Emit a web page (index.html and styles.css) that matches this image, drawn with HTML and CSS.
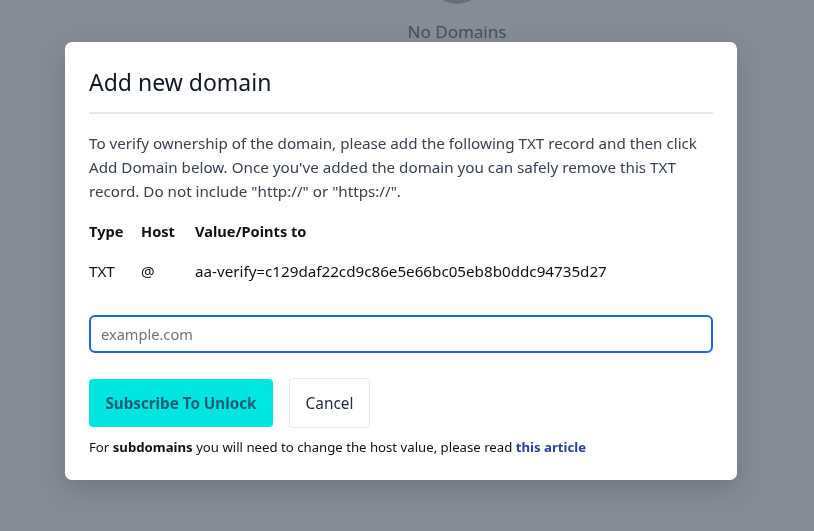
FILE: index.html
```html
<!DOCTYPE html>
<html lang="en">
  <head>
    <meta charset="utf-8">
    <title>Add new domain</title>
    <meta name="viewport" content="width=device-width, initial-scale=1">
    <link rel="stylesheet" href="styles.css">
  </head>
<body>

	<div class="empty">
		<div class="empty-icon"></div>
		<p>No Domains</p>
	</div>

	<div class="overlay"></div>

	<div class="modal">
		<h2 class="modal-title">Add new domain</h2>
		<p class="modal-text">
			To verify ownership of the domain, please add the following TXT record and then click
			Add Domain below. Once you've added the domain you can safely remove this TXT
			record. Do not include "http://" or "https://".
		</p>

		<div class="records">
			<span class="head">Type</span>
			<span class="head">Host</span>
			<span class="head">Value/Points to</span>
			<span>TXT</span>
			<span>@</span>
			<span>aa-verify=c129daf22cd9c86e5e66bc05eb8b0ddc94735d27</span>
		</div>

		<input class="domain-input" type="text" placeholder="example.com">

		<div class="actions">
			<button class="btn btn-primary">Subscribe To Unlock</button>
			<button class="btn btn-cancel">Cancel</button>
		</div>

		<p class="note">For <b>subdomains</b> you will need to change the host value, please read <a href="#">this article</a></p>
	</div>

</body>
</html>
```

FILE: styles.css
```css
* {
    padding: 0;
    margin: 0;
    box-sizing: border-box;
}
body {
    font-family: "Noto Sans", "Open Sans", sans-serif;
    background: #ffffff;
    height: 531px;
    overflow: hidden;
}

/* page behind the dialog */
.empty {
    display: flex;
    flex-direction: column;
    align-items: center;
    padding-left: 100px;
}
.empty-icon {
    width: 56px;
    height: 56px;
    margin-top: -52px;
    border-radius: 50%;
    background: #9ca3af;
}
.empty p {
    margin-top: 16px;
    font-size: 17px;
    color: #374151;
}
.overlay {
    position: fixed;
    inset: 0;
    background: rgba(75, 85, 99, .68);
}

/* dialog */
.modal {
    position: absolute;
    top: 42px;
    left: 65px;
    width: 672px;
    padding: 24px;
    background: #fff;
    border-radius: 7px;
    box-shadow: 0 10px 25px rgba(0, 0, 0, .15);
}
.modal-title {
    font-size: 23px;
    font-weight: 400;
    line-height: 32px;
    color: #111827;
    padding-bottom: 14px;
    border-bottom: 2px solid #e5e7eb;
}
.modal-text {
    margin-top: 17px;
    font-size: 15.2px;
    line-height: 24px;
    color: #374151;
}
.records {
    display: grid;
    grid-template-columns: 52px 54px auto;
    margin-top: 8px;
    font-size: 15.2px;
    line-height: 24px;
    color: #111;
}
.records span {
    padding: 8px 0;
}
.records .head {
    font-size: 14.6px;
    font-weight: 700;
}
.domain-input {
    display: block;
    width: 100%;
    height: 38px;
    margin-top: 24px;
    padding: 0 10px;
    font-family: inherit;
    font-size: 14.6px;
    color: #111;
    border: 2px solid #1d64e0;
    border-radius: 6px;
    outline: none;
}
.domain-input::placeholder {
    color: #6b7280;
}
.actions {
    display: flex;
    align-items: center;
    gap: 16px;
    margin-top: 25px;
}
.btn {
    font-family: inherit;
    font-size: 15.4px;
    cursor: pointer;
}
.btn-primary {
    width: 184px;
    height: 48px;
    border: none;
    border-radius: 4px;
    background: #00e5df;
    color: #155e6f;
    font-size: 15.2px;
    font-weight: 700;
}
.btn-cancel {
    width: 81px;
    height: 50px;
    border: 1px solid #e5e7eb;
    border-radius: 4px;
    background: #fff;
    color: #1f2937;
}
.note {
    margin-top: 10px;
    font-size: 13.2px;
    line-height: 18px;
    color: #111;
}
.note b {
    font-weight: 700;
}
.note a {
    color: #2c40a0;
    font-weight: 700;
    text-decoration: none;
}
```
